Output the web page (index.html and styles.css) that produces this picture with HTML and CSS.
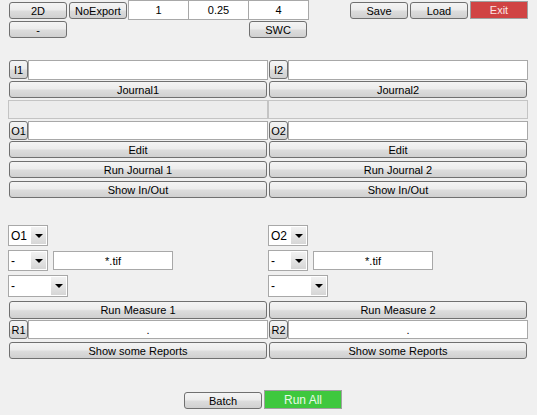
FILE: index.html
```html
<!DOCTYPE html>
<html>
<head>
<meta charset="utf-8">
<link rel="stylesheet" href="styles.css">
</head>
<body>
<div class="app">
  <div class="row1">
    <div class="btn b58 first">2D</div>
    <div class="btn b58 noexp">NoExport</div>
    <div class="fields">
      <div class="field">1</div>
      <div class="field">0.25</div>
      <div class="field">4</div>
    </div>
    <div class="btn b58 save">Save</div>
    <div class="btn b58 load">Load</div>
    <div class="btn b58 exit">Exit</div>
  </div>
  <div class="row2">
    <div class="btn b58 first">-</div>
    <div class="btn b58 swc">SWC</div>
  </div>

  <div class="cols sec1">
    <div class="col">
      <div class="lrow"><div class="btn lbl">I1</div><div class="inp"></div></div>
      <div class="btn full j">Journal1</div>
      <div class="grayfield"></div>
      <div class="lrow orow"><div class="btn lbl">O1</div><div class="inp"></div></div>
      <div class="btn full e">Edit</div>
      <div class="btn full r">Run Journal 1</div>
      <div class="btn full r">Show In/Out</div>
    </div>
    <div class="col">
      <div class="lrow"><div class="btn lbl">I2</div><div class="inp"></div></div>
      <div class="btn full j">Journal2</div>
      <div class="grayfield"></div>
      <div class="lrow orow"><div class="btn lbl">O2</div><div class="inp"></div></div>
      <div class="btn full e">Edit</div>
      <div class="btn full r">Run Journal 2</div>
      <div class="btn full r">Show In/Out</div>
    </div>
  </div>

  <div class="cols sec2">
    <div class="col">
      <div class="sel s40"><span class="val">O1</span><span class="arr"><i></i></span></div>
      <div class="srow">
        <div class="sel s40"><span class="val">-</span><span class="arr"><i></i></span></div>
        <div class="tif">*.tif</div>
      </div>
      <div class="sel s60 wide"><span class="val">-</span><span class="arr"><i></i></span></div>
      <div class="btn full m">Run Measure 1</div>
      <div class="lrow rrow"><div class="btn lbl">R1</div><div class="inp dot">.</div></div>
      <div class="btn full sr">Show some Reports</div>
    </div>
    <div class="col">
      <div class="sel s40"><span class="val">O2</span><span class="arr"><i></i></span></div>
      <div class="srow">
        <div class="sel s40"><span class="val">-</span><span class="arr"><i></i></span></div>
        <div class="tif">*.tif</div>
      </div>
      <div class="sel s60 wide"><span class="val">-</span><span class="arr"><i></i></span></div>
      <div class="btn full m">Run Measure 2</div>
      <div class="lrow rrow"><div class="btn lbl">R2</div><div class="inp dot">.</div></div>
      <div class="btn full sr">Show some Reports</div>
    </div>
  </div>

  <div class="bottom">
    <div class="btn b78">Batch</div>
    <div class="btn b78 runall">Run All</div>
  </div>
</div>
</body>
</html>
```

FILE: styles.css
```css
html, body {
  margin: 0;
  padding: 0;
  background: #f0f0f0;
}
.app {
  width: 537px;
  height: 415px;
  font-family: "Liberation Sans", Arial, sans-serif;
  font-size: 11px;
  color: #000;
  overflow: hidden;
}
.btn {
  box-sizing: border-box;
  border: 1px solid #707070;
  border-radius: 3px;
  background: linear-gradient(#f4f4f4 0%, #ececec 45%, #dcdcdc 55%, #d0d0d0 100%);
  display: flex;
  align-items: center;
  justify-content: center;
  white-space: nowrap;
}
.b58 { width: 58px; height: 17px; }
.row1 {
  display: flex;
  align-items: flex-start;
  height: 19px;
}
.row1 .btn { margin-top: 2px; }
.first { margin-left: 9px; }
.noexp { margin-left: 2px; }
.fields {
  display: flex;
  margin-left: 1px;
}
.field {
  box-sizing: border-box;
  width: 61px;
  height: 20px;
  background: #fff;
  border: 1px solid #a8a8a8;
  display: flex;
  align-items: center;
  justify-content: center;
  margin-left: -1px;
}
.field:first-child { margin-left: 0; }
.save { margin-left: 41px; }
.load { margin-left: 2px; }
.row1 .exit {
  margin-left: 2px;
  margin-top: 1px;
  height: 18px;
  background: #d04343;
  border-color: #a0a0a0;
  border-radius: 0;
  color: #fbe4e4;
}
.row2 {
  display: flex;
  margin-top: 2px;
  height: 17px;
}
.swc { margin-left: 182px; }

.cols {
  display: grid;
  grid-template-columns: 260px 260px;
  padding-left: 8px;
}
.col {
  display: flex;
  flex-direction: column;
}
.sec1 { margin-top: 22px; }
.lrow {
  display: flex;
  height: 20px;
}
.lbl {
  width: 19px;
  height: 19px;
  margin-left: 1px;
  border-radius: 3px;
  font-size: 11px;
}
.inp {
  flex: 1;
  box-sizing: border-box;
  height: 20px;
  background: #fff;
  border: 1px solid #a8a8a8;
}
.full {
  height: 17px;
  margin: 0 1px;
}
.j { margin-top: 1px; }
.grayfield {
  box-sizing: border-box;
  height: 19px;
  margin-top: 2px;
  background: #ececec;
  border: 1px solid #c4c4c4;
}
.orow { margin-top: 2px; height: 19px; }
.orow .inp { height: 19px; }
.e { margin-top: 1px; }
.r { margin-top: 3px; }

.sec2 { margin-top: 27px; }
.sel {
  box-sizing: border-box;
  height: 21px;
  background: #fff;
  border: 1px solid #a8a8a8;
  display: flex;
  align-items: stretch;
}
.s40 { width: 40px; }
.s60 { width: 60px; }
.wide { height: 22px; margin-top: 4px; }
.val {
  flex: 1;
  padding-left: 2px;
  display: flex;
  align-items: center;
  font-size: 12px;
}
.arr {
  width: 15px;
  margin: 1px;
  background: linear-gradient(#f2f2f2, #d6d6d6);
  display: flex;
  align-items: center;
  justify-content: center;
}
.arr i {
  width: 0;
  height: 0;
  border-left: 4px solid transparent;
  border-right: 4px solid transparent;
  border-top: 4px solid #000;
}
.srow {
  display: flex;
  align-items: flex-start;
  margin-top: 4px;
}
.tif {
  box-sizing: border-box;
  width: 120px;
  height: 19px;
  margin-left: 5px;
  margin-top: 1px;
  background: #fff;
  border: 1px solid #a8a8a8;
  display: flex;
  align-items: center;
  justify-content: center;
}
.m { margin-top: 4px; height: 18px; }
.rrow { margin-top: 1px; height: 19px; }
.rrow .inp { height: 19px; }
.dot {
  display: flex;
  align-items: center;
  justify-content: center;
}
.sr { margin-top: 3px; }

.bottom {
  display: flex;
  align-items: flex-end;
  padding-left: 184px;
  margin-top: 31px;
  gap: 2px;
}
.b78 { width: 78px; height: 17px; }
.runall {
  height: 19px;
  background: #3ec83e;
  border-color: #a0a0a0;
  border-radius: 0;
  color: #e8fae8;
  font-size: 12px;
}
```
